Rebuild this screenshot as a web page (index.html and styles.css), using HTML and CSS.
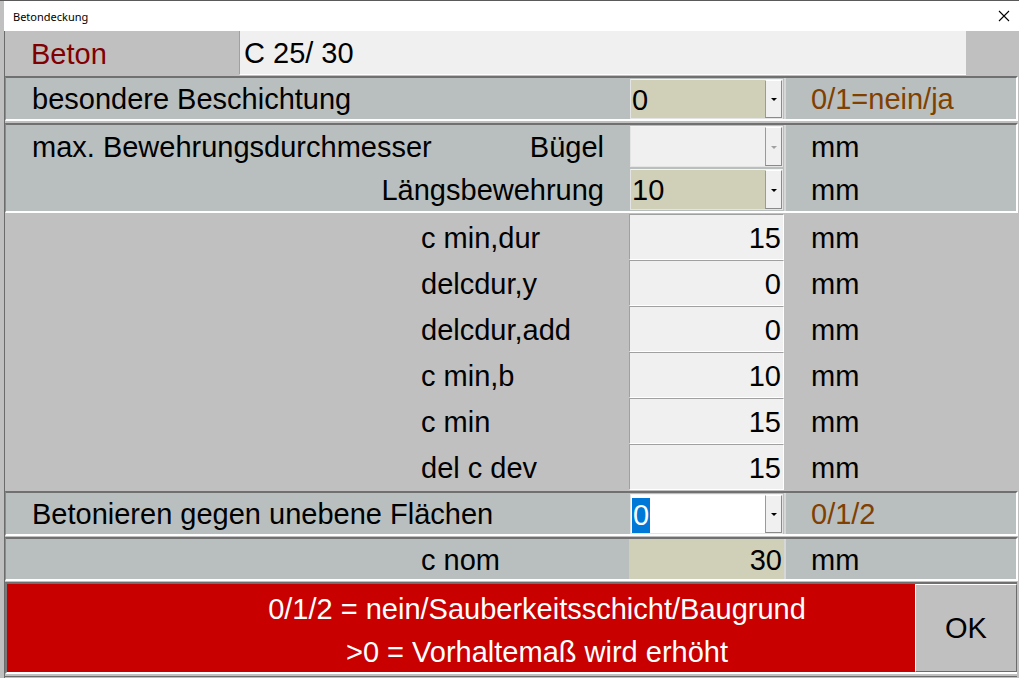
FILE: index.html
```html
<!DOCTYPE html>
<html>
<head>
<meta charset="utf-8">
<link rel="stylesheet" href="styles.css">
</head>
<body>
<div class="win">
  <div class="titlebar">
    <span class="title">Betondeckung</span>
    <svg class="close" width="12" height="12" viewBox="0 0 12 12"><path d="M1 1 L11 11 M11 1 L1 11" stroke="#000" stroke-width="1.1" fill="none"/></svg>
  </div>
  <div class="client">
    <div class="beton">
      <div class="beton-lbl">Beton</div>
      <div class="beton-field">C 25/ 30</div>
    </div>

    <div class="panel p1">
      <div class="pleft">
        <div class="prow">
          <div class="lbl-left">besondere Beschichtung</div>
          <div class="combo khaki"><span class="cval">0</span><span class="cbtn"><i class="arrow"></i></span></div>
        </div>
      </div>
      <div class="unit brown"><span class="ut">0/1=nein/ja</span></div>
    </div>

    <div class="panel p2">
      <div class="pleft">
        <div class="prow">
          <div class="lbl-split"><span>max. Bewehrungsdurchmesser</span><span>Bügel</span></div>
          <div class="combo disabled"><span class="cval"></span><span class="cbtn"><i class="arrow grey"></i></span></div>
        </div>
        <div class="prow">
          <div class="lbl-right">Längsbewehrung</div>
          <div class="combo khaki"><span class="cval">10</span><span class="cbtn"><i class="arrow"></i></span></div>
        </div>
      </div>
      <div class="unit two"><span class="ut">mm</span><span class="ut">mm</span></div>
    </div>

    <div class="grid">
      <div class="grow"><div class="lbl-mid">c min,dur</div><div class="num">15</div><div class="gunit">mm</div></div>
      <div class="grow"><div class="lbl-mid">delcdur,y</div><div class="num">0</div><div class="gunit">mm</div></div>
      <div class="grow"><div class="lbl-mid">delcdur,add</div><div class="num">0</div><div class="gunit">mm</div></div>
      <div class="grow"><div class="lbl-mid">c min,b</div><div class="num">10</div><div class="gunit">mm</div></div>
      <div class="grow"><div class="lbl-mid">c min</div><div class="num">15</div><div class="gunit">mm</div></div>
      <div class="grow"><div class="lbl-mid">del c dev</div><div class="num">15</div><div class="gunit">mm</div></div>
    </div>

    <div class="panel p3">
      <div class="pleft">
        <div class="prow">
          <div class="lbl-left">Betonieren gegen unebene Flächen</div>
          <div class="combo white"><span class="cval"><span class="sel">0</span></span><span class="cbtn"><i class="arrow"></i></span></div>
        </div>
      </div>
      <div class="unit brown"><span class="ut">0/1/2</span></div>
    </div>

    <div class="panel p4">
      <div class="pleft">
        <div class="prow">
          <div class="lbl-mid">c nom</div>
          <div class="numk">30</div>
        </div>
      </div>
      <div class="unit"><span class="ut">mm</span></div>
    </div>

    <div class="bottom">
      <div class="redbox">
        <div>0/1/2 = nein/Sauberkeitsschicht/Baugrund</div>
        <div>&gt;0 = Vorhaltemaß wird erhöht</div>
      </div>
      <div class="okbtn"><span class="oktext">OK</span></div>
    </div>
  </div>
</div>
</body>
</html>
```

FILE: styles.css
```css
* { box-sizing: border-box; }
html, body { margin: 0; padding: 0; }
body {
  width: 1019px;
  height: 678px;
  overflow: hidden;
  background: #c0c0c0;
  font-family: "Liberation Sans", Arial, sans-serif;
}
.win {
  width: 1019px;
  height: 678px;
  background: #c0c0c0;
  border-top: 1px solid #5a5a5a;
  display: flex;
  flex-direction: column;
}
.titlebar {
  height: 30px;
  flex: none;
  margin-left: 4px;
  background: #fff;
  display: flex;
  align-items: center;
  justify-content: space-between;
  padding: 0 9px 0 9px;
}
.title {
  font-family: "Noto Sans", "DejaVu Sans", sans-serif;
  font-size: 11px;
  color: #000;
  padding-top: 1px;
}
.close { display: block; }
.client {
  flex: 1;
  margin-left: 4px;
  margin-right: 1px;
  border-left: 1px solid #6b6b6b;
  display: flex;
  flex-direction: column;
  font-size: 29px;
  color: #000;
}
.beton {
  height: 45px;
  flex: none;
  display: flex;
  align-items: flex-start;
}
.beton-lbl {
  width: 234px;
  height: 44px;
  color: #800000;
  padding-left: 26px;
  padding-top: 2px;
  line-height: 42px;
}
.beton-field {
  width: 727px;
  height: 44px;
  background: #f0f0f0;
  border-left: 1px solid #a0a0a0;
  border-bottom: 1px solid #fff;
  padding-left: 4px;
  padding-top: 2px;
  line-height: 41px;
}
.panel {
  flex: none;
  display: flex;
  background: #b9bfbf;
  border-top: 2px solid #707070;
  border-left: 1px solid #8c8c8c;
  border-bottom: 2px solid #fff;
  border-right: 2px solid #fff;
}
.p1 { margin-bottom: 2px; }
.p2 { margin-bottom: 1px; }
.p3 { margin-top: 1px; margin-bottom: 1px; }
.p4 { margin-bottom: 1px; }
.pleft {
  width: 778px;
  display: flex;
  flex-direction: column;
}
.prow {
  height: 41px;
  display: flex;
  align-items: center;
  justify-content: space-between;
}
.p2 .prow { height: 43px; }
.p4 .prow { height: 40px; }
.lbl-left { padding-left: 26px; padding-top: 2px; }
.lbl-split {
  flex: 1;
  display: flex;
  justify-content: space-between;
  padding-left: 26px;
  padding-right: 26px;
  padding-top: 2px;
}
.lbl-right { flex: 1; text-align: right; padding-right: 26px; padding-top: 2px; }
.lbl-mid { width: 624px; padding-left: 415px; padding-top: 2px; }
.combo {
  width: 153px;
  height: 41px;
  margin-right: 1px;
  display: flex;
  border: 1px solid #e4e4e4;
  border-top-color: #f4f4f4;
}
.p1 .combo, .p3 .combo { height: 40px; }
.combo.khaki { background: #d0cfb8; }
.combo.disabled { background: #f0f0f0; }
.combo.white { background: #fff; }
.cval {
  flex: 1;
  padding-top: 3px;
  line-height: 35px;
  padding-left: 1px;
  overflow: hidden;
  white-space: nowrap;
}
.sel {
  display: inline-block;
  background: #0078d7;
  color: #fff;
  padding: 0 1px;
  line-height: 35px;
}
.cbtn {
  width: 17px;
  background: #f0f0f0;
  border-left: 1px solid #9a9a9a;
  border-top: 1px solid #fff;
  border-bottom: 1px solid #8a8a8a;
  border-right: 1px solid #8a8a8a;
  display: flex;
  align-items: center;
  justify-content: center;
}
.arrow {
  display: block;
  width: 0;
  height: 0;
  border-left: 3px solid transparent;
  border-right: 3px solid transparent;
  border-top: 3px solid #000;
  margin-top: 2px;
}
.arrow.grey { border-top-color: #a0a0a0; }
.unit {
  flex: 1;
  border-left: 2px solid #d6d8d8;
  padding-left: 25px;
  display: flex;
  flex-direction: column;
  justify-content: center;
}
.unit.two { justify-content: flex-start; }
.unit.two .ut { height: 43px; display: flex; align-items: center; }
.ut { padding-top: 2px; }
.brown { color: #804000; }
.grid {
  flex: none;
  display: flex;
  flex-direction: column;
}
.grow {
  height: 46px;
  display: flex;
  align-items: center;
}
.grid .lbl-mid { width: 624px; padding-left: 416px; }
.num {
  width: 155px;
  height: 46px;
  background: #f0f0f0;
  border-top: 1px solid #a0a0a0;
  border-left: 1px solid #a0a0a0;
  border-bottom: 1px solid #fff;
  border-right: 1px solid #fff;
  text-align: right;
  padding-right: 2px;
  padding-top: 2px;
  line-height: 42px;
}
.gunit { padding-left: 27px; padding-top: 2px; }
.numk {
  width: 155px;
  height: 40px;
  background: #d0cfb8;
  text-align: right;
  padding-right: 2px;
  padding-top: 3px;
  line-height: 37px;
}
.bottom {
  flex: none;
  height: 92px;
  display: flex;
  border-top: 2px solid #707070;
  border-left: 2px solid #7a7a7a;
  border-bottom: 2px solid #fff;
  margin-right: 1px;
  box-shadow: 0 2px 0 #c0c0c0, 0 3px 0 #6b6b6b;
}
.redbox {
  width: 908px;
  background: #c80000;
  color: #fff;
  display: flex;
  flex-direction: column;
  justify-content: center;
  align-items: center;
  padding-left: 152px;
  padding-top: 5px;
  line-height: 43px;
  font-size: 29px;
}
.okbtn {
  flex: 1;
  background: #c0c0c0;
  border-top: 1px solid #fff;
  border-left: 1px solid #fff;
  border-right: 1px solid #6b6b6b;
  border-bottom: 1px solid #6b6b6b;
  display: flex;
  align-items: center;
  justify-content: center;
}
.oktext { padding-top: 1px; }
```
